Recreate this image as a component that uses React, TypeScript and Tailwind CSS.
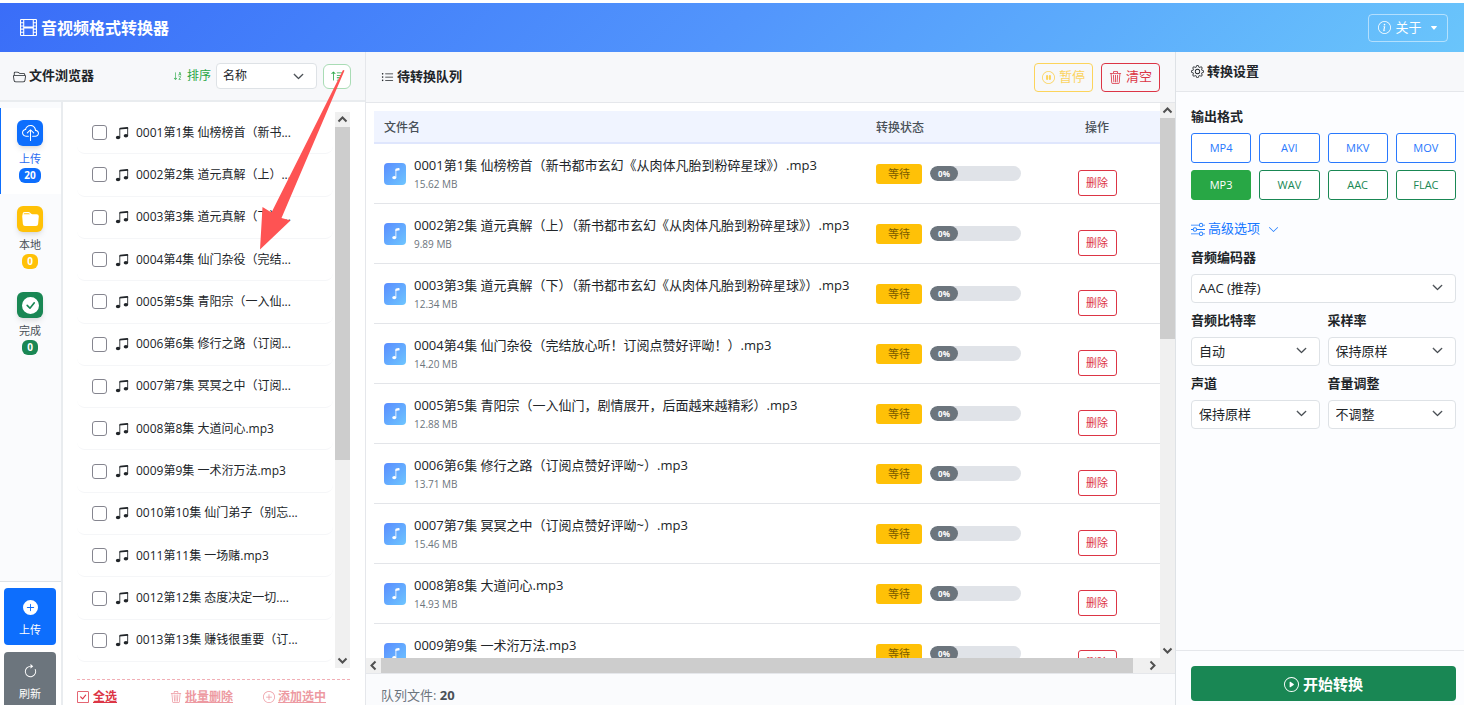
import { useState } from "react";
import type { ReactNode } from "react";
import {
  BsArrowClockwise,
  BsCaretDownFill,
  BsCheckCircleFill,
  BsCheckSquare,
  BsChevronDown,
  BsCloudUpload,
  BsFilm,
  BsFolder2Open,
  BsFolderFill,
  BsGear,
  BsInfoCircle,
  BsListUl,
  BsMusicNote,
  BsMusicNoteBeamed,
  BsPauseCircle,
  BsPlayCircle,
  BsPlusCircle,
  BsPlusCircleFill,
  BsSliders,
  BsSortAlphaDown,
  BsSortUp,
  BsTrash3,
} from "react-icons/bs";

const files = [
  "0001第1集 仙榜榜首（新书...",
  "0002第2集 道元真解（上）...",
  "0003第3集 道元真解（下）...",
  "0004第4集 仙门杂役（完结...",
  "0005第5集 青阳宗（一入仙...",
  "0006第6集 修行之路（订阅...",
  "0007第7集 冥冥之中（订阅...",
  "0008第8集 大道问心.mp3",
  "0009第9集 一术洐万法.mp3",
  "0010第10集 仙门弟子（别忘...",
  "0011第11集 一场赌.mp3",
  "0012第12集 态度决定一切....",
  "0013第13集 赚钱很重要（订...",
];

const queue = [
  { name: "0001第1集 仙榜榜首（新书都市玄幻《从肉体凡胎到粉碎星球》）.mp3", size: "15.62 MB" },
  { name: "0002第2集 道元真解（上）（新书都市玄幻《从肉体凡胎到粉碎星球》）.mp3", size: "9.89 MB" },
  { name: "0003第3集 道元真解（下）（新书都市玄幻《从肉体凡胎到粉碎星球》）.mp3", size: "12.34 MB" },
  { name: "0004第4集 仙门杂役（完结放心听！订阅点赞好评呦！）.mp3", size: "14.20 MB" },
  { name: "0005第5集 青阳宗（一入仙门，剧情展开，后面越来越精彩）.mp3", size: "12.88 MB" },
  { name: "0006第6集 修行之路（订阅点赞好评呦~）.mp3", size: "13.71 MB" },
  { name: "0007第7集 冥冥之中（订阅点赞好评呦~）.mp3", size: "15.46 MB" },
  { name: "0008第8集 大道问心.mp3", size: "14.93 MB" },
  { name: "0009第9集 一术洐万法.mp3", size: "14.05 MB" },
];

const tabs = [
  { label: "上传", count: 20, color: "bg-[#0d6efd]", icon: <BsCloudUpload size={17} /> },
  { label: "本地", count: 0, color: "bg-[#ffc107]", icon: <BsFolderFill size={17} /> },
  { label: "完成", count: 0, color: "bg-[#198754]", icon: <BsCheckCircleFill size={17} /> },
];

const videoFormats = ["MP4", "AVI", "MKV", "MOV"];
const audioFormats = ["MP3", "WAV", "AAC", "FLAC"];

function ScrollArrow({ className }: { className: string }) {
  return (
    <svg viewBox="0 0 15 15" className={`size-[15px] shrink-0 ${className}`} fill="none" stroke="#505050" strokeWidth="2">
      <path d="M3.5 9.5 7.5 5.5l4 4" />
    </svg>
  );
}

function Select({ id, label, value }: { id: string; label: string; value: string }) {
  return (
    <div>
      <label htmlFor={id} className="block h-[17px] text-[13px] leading-4 font-bold">{label}</label>
      <div className="relative mt-2">
        <select id={id} className="h-[29px] w-full appearance-none rounded border border-[#dee2e6] bg-white pl-[7px] text-[13px]">
          <option>{value}</option>
        </select>
        <BsChevronDown size={11} className="pointer-events-none absolute top-2 right-[13px] stroke-1 text-[#343a40]" />
      </div>
    </div>
  );
}

function PanelTitle({ icon, children }: { icon: ReactNode; children: ReactNode }) {
  return (
    <h2 className="flex items-center gap-[3px] text-[13px] font-bold">
      {icon}
      {children}
    </h2>
  );
}

export default function App() {
  const [tab, setTab] = useState("上传");
  const [format, setFormat] = useState("MP3");
  const [checked, setChecked] = useState<string[]>([]);

  const toggle = (name: string) => {
    setChecked(checked.includes(name) ? checked.filter((n) => n !== name) : [...checked, name]);
  };

  return (
    <div className="relative flex h-screen flex-col overflow-hidden bg-white pt-[3px] font-['Open_Sans','Noto_Sans_CJK_SC',sans-serif] text-[13px] text-[#212529]">
      {/* Top bar */}
      <header className="flex h-[49px] shrink-0 items-center justify-between bg-linear-135 from-[#3a6df8] via-[#5295fc] to-[#6ac5fb] pr-4 pl-5 text-white">
        <h1 className="flex items-center gap-1 text-base font-bold">
          <BsFilm size={17} />
          音视频格式转换器
        </h1>
        <button className="flex h-7 w-20 items-center justify-center gap-1 rounded border border-white/50 text-[13px]">
          <BsInfoCircle size={13} />
          关于
          <BsCaretDownFill size={8} className="ml-1" />
        </button>
      </header>

      <div className="flex min-h-0 flex-1">
        {/* File browser */}
        <section className="flex w-1/4 shrink-0 flex-col border-r border-[#e5e7eb]">
          <div className="flex h-[50px] shrink-0 items-center border-b-2 border-[#e9ecef] bg-[#f7f8fa] pr-[14px] pl-[13px]">
            <PanelTitle icon={<BsFolder2Open size={13} />}>文件浏览器</PanelTitle>
            <label htmlFor="sort" className="ml-auto flex items-center gap-1 text-xs text-[#28a745]">
              <BsSortAlphaDown size={10} />
              排序
            </label>
            <div className="relative ml-[5px]">
              <select id="sort" className="h-[26px] w-[101px] appearance-none rounded border border-[#dee2e6] bg-white pl-[6px] text-xs">
                <option>名称</option>
              </select>
              <BsChevronDown size={11} className="pointer-events-none absolute top-2 right-[13px] stroke-1 text-[#343a40]" />
            </div>
            <button aria-label="升序" className="ml-[6px] flex h-[25px] w-7 items-center justify-center rounded-md border border-[#a9dcb5] bg-white text-[#28a745]">
              <BsSortUp size={13} />
            </button>
          </div>

          <div className="flex min-h-0 flex-1">
            <nav className="flex w-[63px] shrink-0 flex-col border-r-2 border-[#e9ecef] bg-[#fafbfd] pt-[6px]">
              {tabs.map((t) => (
                <button
                  key={t.label}
                  onClick={() => setTab(t.label)}
                  className={`flex h-[86px] flex-col items-center border-l pt-3 pr-[2px] ${tab === t.label ? "border-[#0d6efd] bg-white text-[#2b6cf0]" : "border-transparent text-[#495057]"}`}
                >
                  <span className={`flex size-[26px] items-center justify-center rounded-md text-white shadow-md ${t.color}`}>{t.icon}</span>
                  <span className="mt-1 text-[11px] leading-[18px]">{t.label}</span>
                  <span className={`rounded-md px-[5px] text-[10px] leading-[15px] font-bold text-white ${t.color}`}>{t.count}</span>
                </button>
              ))}
              <div className="mt-auto flex h-[124px] flex-col gap-[7px] border-t border-[#dee2e6] bg-white pt-[6px] pr-[5px] pl-1">
                <button className="flex h-[57px] shrink-0 flex-col items-center justify-center gap-[7px] rounded bg-[#0d6efd] text-[11px] leading-4 text-white">
                  <BsPlusCircleFill size={15} className="mt-1" />
                  上传
                </button>
                <button className="flex h-[57px] shrink-0 flex-col items-center justify-center gap-[7px] rounded bg-[#6c757d] text-[11px] leading-4 text-white">
                  <BsArrowClockwise size={15} className="mt-1" />
                  刷新
                </button>
              </div>
            </nav>

            <div className="flex min-w-0 flex-1 flex-col pr-[15px] pl-[14px]">
              <div className="mt-[10px] flex min-h-0 flex-1">
                <ul className="mb-[6px] grid min-w-0 flex-1 auto-rows-fr">
                  {files.map((name) => (
                    <li key={name} className="mr-0.5 min-h-0 rounded-lg border-b border-[#f5f6f8]">
                      <label className="flex h-full items-center pl-[15px] text-xs whitespace-nowrap">
                        <input
                          type="checkbox"
                          checked={checked.includes(name)}
                          onChange={() => toggle(name)}
                          className="size-[15px] shrink-0 appearance-none rounded-[3px] border border-[#85858f] bg-white checked:bg-[#0d6efd]"
                        />
                        <BsMusicNoteBeamed size={14} className="mr-[7px] ml-2 shrink-0" />
                        {name}
                      </label>
                    </li>
                  ))}
                </ul>
                <div className="flex w-[15px] shrink-0 flex-col bg-[#f0f0f0]">
                  <ScrollArrow className="" />
                  <div className="h-[333px] bg-[#cdcdcd]" />
                  <ScrollArrow className="mt-auto rotate-180" />
                </div>
              </div>
              <div className="mt-[11px] flex h-[26px] shrink-0 items-start border-t border-dashed border-[#f1aeb5] pt-[9px] text-xs font-bold text-[#dc3545]">
                <button className="flex items-center gap-1 underline underline-offset-1">
                  <BsCheckSquare size={12} />
                  全选
                </button>
                <button className="mr-[30px] ml-auto flex items-center gap-[3px] underline underline-offset-1 opacity-50">
                  <BsTrash3 size={12} />
                  批量删除
                </button>
                <button className="mr-6 flex items-center gap-[3px] underline underline-offset-1 opacity-50">
                  <BsPlusCircle size={12} />
                  添加选中
                </button>
              </div>
            </div>
          </div>
        </section>

        {/* Queue */}
        <section className="flex min-w-0 flex-1 flex-col">
          <div className="flex h-[51px] shrink-0 items-center border-b border-[#e5e7eb] bg-[#f7f8fa] pr-[15px] pl-[15px]">
            <PanelTitle icon={<BsListUl size={13} />}>待转换队列</PanelTitle>
            <button className="ml-auto flex h-[29px] w-[59px] items-center justify-center gap-1 rounded border border-[#ffc107] text-[13px] text-[#ffc107] opacity-65">
              <BsPauseCircle size={13} />
              暂停
            </button>
            <button className="ml-2 flex h-[29px] w-[59px] items-center justify-center gap-1 rounded border border-[#dc3545] text-[13px] text-[#dc3545]">
              <BsTrash3 size={13} />
              清空
            </button>
          </div>

          <div className="flex min-h-0 flex-1">
            <div className="min-w-0 flex-1 overflow-hidden pt-2 pl-2">
              <table className="w-full table-fixed border-separate border-spacing-0">
                <thead>
                  <tr className="h-[33px] bg-[#f0f4ff] text-xs text-[#495057]">
                    <th className="border-b-2 border-[#dfe6fd] pt-[2px] pl-[10px] text-left font-medium">文件名</th>
                    <th className="w-[168px] border-b-2 border-[#dfe6fd] pt-[2px] pl-[10px] text-left font-medium">转换状态</th>
                    <th className="w-[126px] border-b-2 border-[#dfe6fd] pt-[2px] text-center font-medium">操作</th>
                  </tr>
                </thead>
                <tbody>
                  {queue.map((item) => (
                    <tr key={item.name} className="h-[60px]">
                      <td className="border-b border-[#e3e5e9] pl-[10px]">
                        <div className="flex items-center gap-2">
                          <span className="flex size-[22px] shrink-0 items-center justify-center rounded bg-linear-135 from-[#5b8cff] to-[#6ec6ff] text-white">
                            <BsMusicNote size={13} />
                          </span>
                          <div className="min-w-0 whitespace-nowrap">
                            <p className="text-[13px] leading-5">{item.name}</p>
                            <p className="text-[10px] leading-[18px] text-[#6c757d]">{item.size}</p>
                          </div>
                        </div>
                      </td>
                      <td className="border-b border-[#e3e5e9] pl-[10px]">
                        <div className="flex items-center gap-2">
                          <span className="h-5 w-[46px] rounded-[3px] bg-[#ffc107] text-center text-[11px] leading-5 text-[#7a5c00]">等待</span>
                          <div className="h-[15px] w-[91px] overflow-hidden rounded-full bg-[#e0e3e8]">
                            <div className="h-full w-7 rounded-full bg-[#6c757d] text-center text-[8px] leading-[15px] font-bold text-white">0%</div>
                          </div>
                        </div>
                      </td>
                      <td className="border-b border-[#e3e5e9] pt-[18px] text-center">
                        <button className="h-[26px] w-[39px] rounded-[3px] border border-[#dc3545] pt-px text-[11px] text-[#dc3545]">删除</button>
                      </td>
                    </tr>
                  ))}
                </tbody>
              </table>
            </div>
            <div className="flex w-[15px] shrink-0 flex-col bg-[#f0f0f0]">
              <ScrollArrow className="" />
              <div className="h-[221px] bg-[#cdcdcd]" />
              <ScrollArrow className="mt-auto rotate-180" />
            </div>
          </div>
          <div className="flex h-[15px] shrink-0 bg-[#f0f0f0] pr-[15px]">
            <ScrollArrow className="-rotate-90" />
            <div className="mr-3 flex-1 bg-[#cdcdcd]" />
            <ScrollArrow className="rotate-90" />
          </div>
          <div className="h-8 shrink-0 border-t border-[#e5e7eb] bg-[#fafbfd] pt-[11px] pl-[15px] text-[13px] leading-5 text-[#6c757d]">
            队列文件: <b className="text-[#495057]">20</b>
          </div>
        </section>

        {/* Settings */}
        <section className="flex w-[289px] shrink-0 flex-col border-l border-[#dee2e6] bg-[#fcfdff]">
          <div className="flex h-10 shrink-0 items-center border-b border-[#e5e7eb] bg-[#f7f8fa] pl-[15px]">
            <PanelTitle icon={<BsGear size={13} />}>转换设置</PanelTitle>
          </div>

          <div className="flex-1 pt-4 pr-2 pl-[15px]">
            <h3 className="text-[13px] leading-[17px] font-bold">输出格式</h3>
            <div className="mt-2 grid grid-cols-4 gap-x-2 gap-y-[7px] text-[11px]">
              {videoFormats.map((f) => (
                <button
                  key={f}
                  onClick={() => setFormat(f)}
                  className={`h-[30px] rounded-[3px] border border-[#2878fd] ${format === f ? "bg-[#0d6efd] text-white" : "bg-white text-[#2878fd]"}`}
                >
                  {f}
                </button>
              ))}
              {audioFormats.map((f) => (
                <button
                  key={f}
                  onClick={() => setFormat(f)}
                  className={`h-[30px] rounded-[3px] border ${format === f ? "border-[#28a745] bg-[#28a745] text-white" : "border-[#198754] bg-white text-[#198754]"}`}
                >
                  {f}
                </button>
              ))}
            </div>

            <button className="mt-[19px] flex h-5 items-center gap-[3px] text-[13px] text-[#1677ff]">
              <BsSliders size={14} />
              高级选项
              <BsChevronDown size={11} className="ml-[5px]" />
            </button>

            <div className="mt-[10px] grid grid-cols-2 gap-x-2 gap-y-[9px]">
              <div className="col-span-2">
                <Select id="codec" label="音频编码器" value="AAC (推荐)" />
              </div>
              <Select id="bitrate" label="音频比特率" value="自动" />
              <Select id="rate" label="采样率" value="保持原样" />
              <Select id="channel" label="声道" value="保持原样" />
              <Select id="volume" label="音量调整" value="不调整" />
            </div>
          </div>

          <div className="shrink-0 border-t border-[#e5e7eb] pt-[15px] pr-2 pb-1 pl-[15px]">
            <button className="flex h-[35px] w-full items-center justify-center gap-1 rounded bg-[#198754] pt-[2px] text-[15px] font-bold text-white">
              <BsPlayCircle size={15} />
              开始转换
            </button>
          </div>
        </section>
      </div>

      {/* Red pointer from the sort button to the list */}
      <svg className="pointer-events-none absolute top-0 left-0" width="366" height="260" viewBox="0 0 366 260">
        <path d="M343 70 344.500 70.500 281.500 218 290.500 220.500 260 249.500 262.500 207 271.500 212.500Z" fill="#fe5353" />
      </svg>
    </div>
  );
}
